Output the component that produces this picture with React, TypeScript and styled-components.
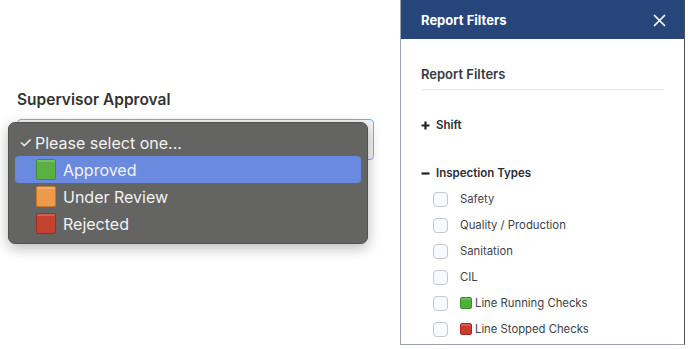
import styled, { createGlobalStyle } from "styled-components"

const GlobalStyle = createGlobalStyle`
  html, body {
    margin: 0;
    padding: 0;
    background: #ffffff;
  }
  body {
    font-family: Inter, "Liberation Sans", sans-serif;
    -webkit-font-smoothing: antialiased;
  }
`

const Page = styled.div`
  display: flex;
  width: 688px;
  height: 349px;
  overflow: hidden;
`

// ----- left side: the native select that is open -----

const FormSide = styled.div`
  width: 383px;
  padding: 90px 0 0 17px;
  box-sizing: border-box;
`

const Label = styled.div`
  font-size: 15.5px;
  line-height: 19px;
  font-weight: 600;
  color: #333333;
`

const Field = styled.div`
  position: relative;
  margin-top: 10px;
  width: 357px;
  height: 41px;
  box-sizing: border-box;
  border: 1px solid #86a8e8;
  border-radius: 4px;
  background: #f4f4f4;
`

const Menu = styled.ul`
  position: absolute;
  left: -10px;
  top: 2px;
  width: 360px;
  margin: 0;
  padding: 6px;
  box-sizing: border-box;
  list-style: none;
  background: #646562;
  border: 1px solid #505150;
  border-radius: 7px;
  box-shadow: 0 4px 14px rgba(0, 0, 0, 0.28);
`

const Option = styled.li<{ $active?: boolean }>`
  display: flex;
  align-items: center;
  gap: 7px;
  height: 27px;
  padding-left: ${(p) => (p.$active !== undefined ? "21px" : "4px")};
  border-radius: 4px;
  background: ${(p) => (p.$active ? "#6a8ae0" : "transparent")};
  color: #f2f2f2;
  font-size: 16px;
`

const Check = styled.span`
  font-size: 15px;
  width: 10px;
  margin-right: -1px;
`

const Swatch = styled.span<{ $color: string; $edge: string; $size?: number }>`
  display: inline-block;
  width: ${(p) => p.$size ?? 20}px;
  height: ${(p) => p.$size ?? 21}px;
  box-sizing: border-box;
  border: 1px solid ${(p) => p.$edge};
  border-radius: 2px;
  background: ${(p) => p.$color};
  box-shadow: inset 0 2px 0 rgba(255, 255, 255, 0.18);
  flex-shrink: 0;
`

// ----- right side: the filters drawer -----

const Drawer = styled.aside`
  width: 285px;
  height: 345px;
  box-sizing: border-box;
  margin-left: 17px;
  border-left: 1px solid #9aa3b4;
  border-right: 1px solid #4d4f55;
  border-bottom: 1px solid #9aa0ab;
  display: flex;
  flex-direction: column;
`

const DrawerHeader = styled.header`
  height: 39px;
  flex-shrink: 0;
  background: #26457a;
  display: flex;
  align-items: center;
  justify-content: space-between;
  padding: 0 18px 0 20px;
  color: #ffffff;
  font-size: 13px;
  font-weight: 700;
`

const CloseButton = styled.button`
  all: unset;
  display: flex;
  width: 13px;
  height: 13px;
  margin-top: 1px;
`

const DrawerBody = styled.div`
  padding: 25px 20px 0 20px;
`

const SectionTitle = styled.div`
  font-size: 13px;
  line-height: 20px;
  font-weight: 600;
  color: #333a44;
  padding-bottom: 5px;
  border-bottom: 1px solid #e4e6ea;
`

const Group = styled.div<{ $gap: number }>`
  margin-top: ${(p) => p.$gap}px;
`

const GroupToggle = styled.div`
  display: flex;
  align-items: center;
  gap: 6px;
  height: 20px;
  font-size: 11.5px;
  font-weight: 600;
  color: #2b2f36;
`

const Options = styled.ul`
  list-style: none;
  margin: 3px 0 0;
  padding: 0 0 0 12px;
`

const OptionRow = styled.li`
  display: flex;
  align-items: center;
  height: 26px;
  font-size: 11.3px;
  color: #3d4148;
`

const Box = styled.span`
  width: 15px;
  height: 15px;
  box-sizing: border-box;
  border: 1px solid #c4c7cc;
  border-radius: 4px;
  background: #f7faff;
  margin-right: 12px;
  flex-shrink: 0;
`

const Tag = styled.span`
  display: inline-flex;
  align-items: center;
  gap: 3px;
`

function PlusIcon() {
  return (
    <svg width="9" height="9" viewBox="0 0 9 9">
      <path d="M4.5 0.5v8M0.5 4.5h8" stroke="#1f2228" strokeWidth="2.2" />
    </svg>
  )
}

function MinusIcon() {
  return (
    <svg width="9" height="9" viewBox="0 0 9 9">
      <path d="M0.5 4.5h8" stroke="#1f2228" strokeWidth="2.2" />
    </svg>
  )
}

function CloseIcon() {
  return (
    <svg width="13" height="13" viewBox="0 0 13 13">
      <path d="M1.5 1.5l10 10M11.5 1.5l-10 10" stroke="#ffffff" strokeWidth="1.7" strokeLinecap="round" />
    </svg>
  )
}

const approvals = [
  { label: "Approved", color: "#58b142", edge: "#3f8f2e", active: true },
  { label: "Under Review", color: "#ec9a4c", edge: "#c7772d", active: false },
  { label: "Rejected", color: "#c2412f", edge: "#9b2d20", active: false },
]

const inspectionTypes: { label: string; color?: string; edge?: string }[] = [
  { label: "Safety" },
  { label: "Quality / Production" },
  { label: "Sanitation" },
  { label: "CIL" },
  { label: "Line Running Checks", color: "#4fae38", edge: "#3a8f27" },
  { label: "Line Stopped Checks", color: "#cc3b2c", edge: "#a82a1f" },
]

export default function App() {
  return (
    <Page>
      <GlobalStyle />
      <FormSide>
        <Label>Supervisor Approval</Label>
        <Field>
          <Menu>
            <Option>
              <Check>✓</Check>
              Please select one...
            </Option>
            {approvals.map((item) => (
              <Option key={item.label} $active={item.active}>
                <Swatch $color={item.color} $edge={item.edge} />
                {item.label}
              </Option>
            ))}
          </Menu>
        </Field>
      </FormSide>

      <Drawer>
        <DrawerHeader>
          Report Filters
          <CloseButton aria-label="Close">
            <CloseIcon />
          </CloseButton>
        </DrawerHeader>
        <DrawerBody>
          <SectionTitle>Report Filters</SectionTitle>
          <Group $gap={25}>
            <GroupToggle>
              <PlusIcon />
              Shift
            </GroupToggle>
          </Group>
          <Group $gap={28}>
            <GroupToggle>
              <MinusIcon />
              Inspection Types
            </GroupToggle>
            <Options>
              {inspectionTypes.map((type) => (
                <OptionRow key={type.label}>
                  <Box />
                  {type.color ? (
                    <Tag>
                      <Swatch $color={type.color} $edge={type.edge!} $size={12} />
                      {type.label}
                    </Tag>
                  ) : (
                    type.label
                  )}
                </OptionRow>
              ))}
            </Options>
          </Group>
        </DrawerBody>
      </Drawer>
    </Page>
  )
}
